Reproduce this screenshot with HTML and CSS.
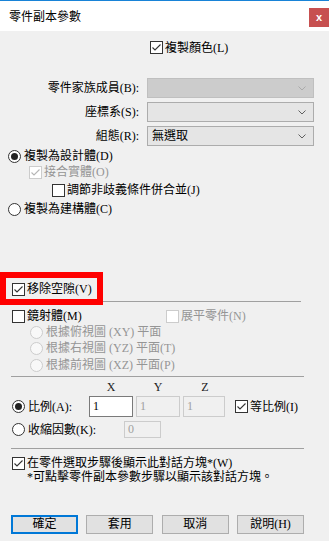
FILE: index.html
```html
<!DOCTYPE html>
<html lang="zh-Hant">
<head>
    <meta charset="UTF-8">
    <meta name="viewport" content="width=device-width, initial-scale=1.0">
    <title>零件副本參數</title>
    <link rel="stylesheet" href="styles.css">
</head>
<body>

<div class="titlebar">
    <span class="title">零件副本參數</span>
    <span class="close">x</span>
</div>

<!-- 複製顏色 -->
<div class="opt copy-color">
    <span class="cb"><svg viewBox="0 0 11 11"><polyline points="1.5,5.5 4,8 9.5,2.5"/></svg></span>
    複製顏色(L)
</div>

<div class="fields">
    <span class="flabel">零件家族成員(B):</span>
    <div class="combo off"><span></span><svg viewBox="0 0 8 5"><polyline points="0.5,0.5 4,4 7.5,0.5"/></svg></div>
    <span class="flabel">座標系(S):</span>
    <div class="combo"><span></span><svg viewBox="0 0 8 5"><polyline points="0.5,0.5 4,4 7.5,0.5"/></svg></div>
    <span class="flabel">組態(R):</span>
    <div class="combo"><span>無選取</span><svg viewBox="0 0 8 5"><polyline points="0.5,0.5 4,4 7.5,0.5"/></svg></div>
</div>

<div class="opt r-design"><span class="rb on"></span>複製為設計體(D)</div>
<div class="opt c-join dis">
    <span class="cb off"><svg viewBox="0 0 11 11"><polyline points="1.5,5.5 4,8 9.5,2.5"/></svg></span>
    接合實體(O)
</div>
<div class="opt c-adjust"><span class="cb"></span>調節非歧義條件併合並(J)</div>
<div class="opt r-build"><span class="rb"></span>複製為建構體(C)</div>

<!-- 移除空隙 (標示框) -->
<div class="opt gap-row">
    <span class="cb"><svg viewBox="0 0 11 11"><polyline points="1.5,5.5 4,8 9.5,2.5"/></svg></span>
    移除空隙(V)
</div>
<div class="sep sep-first"></div>

<div class="mirror-row">
    <div class="opt"><span class="cb"></span>鏡射體(M)</div>
    <div class="opt dis"><span class="cb off"></span>展平零件(N)</div>
</div>
<div class="opt plane dis"><span class="rb off"></span>根據俯視圖 (XY) 平面</div>
<div class="opt plane dis"><span class="rb off"></span>根據右視圖 (YZ) 平面(T)</div>
<div class="opt plane plane-last dis"><span class="rb off"></span>根據前視圖 (XZ) 平面(P)</div>

<div class="sep"></div>

<div class="xyz">
    <span>X</span>
    <span>Y</span>
    <span>Z</span>
</div>
<div class="scale-row">
    <div class="rlabel"><span class="rb on"></span>比例(A):</div>
    <div class="box">1</div>
    <div class="box off">1</div>
    <div class="box off narrow">1</div>
    <div class="opt uniform">
        <span class="cb"><svg viewBox="0 0 11 11"><polyline points="1.5,5.5 4,8 9.5,2.5"/></svg></span>
        等比例(I)
    </div>
</div>
<div class="shrink-row">
    <div class="rlabel"><span class="rb"></span>收縮因數(K):</div>
    <div class="box off small">0</div>
</div>

<div class="sep sep-last"></div>

<div class="show-row">
    <span class="cb"><svg viewBox="0 0 11 11"><polyline points="1.5,5.5 4,8 9.5,2.5"/></svg></span>
    <div class="show-text">
        在零件選取步驟後顯示此對話方塊*(W)<br>
        *可點擊零件副本參數步驟以顯示該對話方塊。
    </div>
</div>

<div class="buttons">
    <button class="default">確定</button>
    <button>套用</button>
    <button>取消</button>
    <button>說明(H)</button>
</div>

</body>
</html>
```

FILE: styles.css
```css
*, *::before, *::after {
    box-sizing: border-box;
}
body {
    margin: 0;
    width: 329px;
    height: 541px;
    overflow: hidden;
    background-color: #f0f0f0;
    color: #000;
    font: 12px/16px "Liberation Serif", "Noto Sans CJK TC", serif;
}
.titlebar {
    display: flex;
    justify-content: space-between;
    height: 31px;
    border-top: 1px solid #1883d7;
    background-color: #fff;
}
.title {
    padding-left: 9px;
    line-height: 30px;
    font-family: "Noto Sans CJK TC", sans-serif;
}
.close {
    width: 20px;
    height: 19px;
    margin-top: 7px;
    background-color: #c75050;
    color: #fff;
    font: bold 11px/18px "Liberation Sans", sans-serif;
    text-align: center;
}

/* 一般選項列 */
.opt {
    display: flex;
    align-items: center;
    height: 16px;
    white-space: nowrap;
}
.dis {
    color: #959595;
}
.cb {
    display: inline-flex;
    flex: none;
    width: 13px;
    height: 13px;
    margin-right: 2px;
    border: 1px solid #333;
    background-color: #fff;
}
.cb svg {
    width: 11px;
    height: 11px;
    fill: none;
    stroke: #333;
    stroke-width: 1.1;
}
.cb.off {
    border-color: #cccccc;
}
.cb.off svg {
    stroke: #b5b5b5;
}
.rb {
    display: inline-flex;
    align-items: center;
    justify-content: center;
    flex: none;
    width: 13px;
    height: 13px;
    margin-right: 3px;
    border: 1px solid #333;
    border-radius: 50%;
    background-color: #fff;
}
.rb.on::after {
    content: "";
    width: 7px;
    height: 7px;
    border-radius: 50%;
    background-color: #222;
}
.rb.off {
    border-color: #cccccc;
    background-color: #f8f8f8;
}

.copy-color {
    height: 17px;
    margin-top: 8px;
    padding-left: 150px;
}

/* 下拉選單 */
.fields {
    display: grid;
    grid-template-columns: 139px 167px;
    column-gap: 8px;
    row-gap: 4px;
    align-items: center;
    margin-top: 22px;
}
.flabel {
    text-align: right;
    white-space: nowrap;
}
.combo {
    display: flex;
    align-items: center;
    justify-content: space-between;
    height: 20px;
    padding: 0 7px 0 4px;
    border: 1px solid #acacac;
    background-color: #e5e5e5;
}
.combo svg {
    width: 8px;
    height: 5px;
    fill: none;
    stroke: #606060;
    stroke-width: 1;
}
.combo.off {
    border-color: #bfbfbf;
    background-color: #cccccc;
}
.combo.off svg {
    stroke: #aaaaaa;
}

.r-design {
    margin-top: 2px;
    padding-left: 8px;
}
.c-join {
    padding-left: 29px;
}
.c-adjust {
    margin-top: 2px;
    padding-left: 52px;
}
.r-build {
    margin-top: 3px;
    padding-left: 8px;
}

/* 移除空隙 + 紅色標示框 */
.gap-row {
    position: relative;
    margin-top: 64px;
    padding-left: 12px;
}
.gap-row::after {
    content: "";
    position: absolute;
    left: 0;
    top: -9px;
    width: 103px;
    height: 33px;
    border: 6px solid #ff0000;
}

.sep {
    width: 293px;
    height: 1px;
    margin: 3px 0 0 11px;
    background-color: #a0a0a0;
}
.sep-first {
    width: 294px;
    margin: 4px 0 0 7px;
}
.sep-last {
    margin-top: 10px;
}

.mirror-row {
    display: grid;
    grid-template-columns: 154px auto;
    margin-top: 6px;
    padding-left: 12px;
}
.plane {
    padding-left: 30px;
}
.plane-last {
    margin-top: 1px;
}

/* 比例 */
.xyz {
    display: flex;
    gap: 3px;
    height: 14px;
    margin-top: 3px;
    padding-left: 89px;
    color: #222;
    line-height: 14px;
}
.xyz span {
    width: 44px;
    text-align: center;
}
.scale-row,
.shrink-row {
    display: flex;
    align-items: center;
    padding-left: 12px;
}
.scale-row {
    height: 21px;
    margin-top: 2px;
    gap: 3px;
}
.rlabel {
    display: flex;
    align-items: center;
    width: 74px;
    white-space: nowrap;
}
.box {
    width: 44px;
    height: 21px;
    padding-left: 3px;
    border: 1px solid #7a7a7a;
    background-color: #fff;
    line-height: 19px;
}
.box.off {
    border-color: #cccccc;
    background-color: #f0f0f0;
    color: #a0a0a0;
}
.box.narrow {
    width: 42px;
}
.uniform {
    margin-left: 7px;
}
.shrink-row {
    height: 17px;
    margin-top: 4px;
}
.shrink-row .rlabel {
    width: 112px;
}
.box.small {
    width: 37px;
    height: 17px;
    line-height: 15px;
}

.show-row {
    display: flex;
    margin-top: 7px;
    padding-left: 12px;
}
.show-row .cb {
    margin-top: 1px;
}
.show-text {
    line-height: 14px;
    white-space: nowrap;
}

.buttons {
    display: flex;
    justify-content: space-between;
    margin-top: 31px;
    padding: 0 25px 0 11px;
}
button {
    width: 67px;
    height: 19px;
    padding: 0;
    border: 1px solid #adadad;
    background-color: #e1e1e1;
    color: #000;
    font: inherit;
    line-height: 17px;
}
button.default {
    border: 2px solid #0078d7;
    line-height: 15px;
}
```
